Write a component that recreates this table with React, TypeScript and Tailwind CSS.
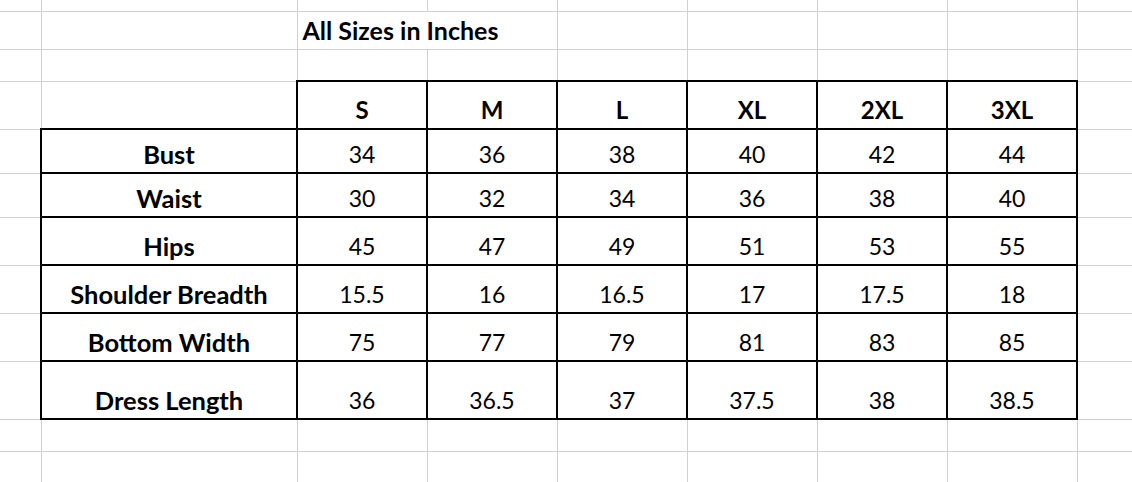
const SIZES = ['S', 'M', 'L', 'XL', '2XL', '3XL'];

const ROWS: { label: string; vals: string[]; h: string }[] = [
  { label: 'Bust', vals: ['34', '36', '38', '40', '42', '44'], h: 'h-[44px]' },
  { label: 'Waist', vals: ['30', '32', '34', '36', '38', '40'], h: 'h-[44px]' },
  { label: 'Hips', vals: ['45', '47', '49', '51', '53', '55'], h: 'h-[48px]' },
  { label: 'Shoulder Breadth', vals: ['15.5', '16', '16.5', '17', '17.5', '18'], h: 'h-[48px]' },
  { label: 'Bottom Width', vals: ['75', '77', '79', '81', '83', '85'], h: 'h-[48px]' },
  { label: 'Dress Length', vals: ['36', '36.5', '37', '37.5', '38', '38.5'], h: 'h-[58px]' },
];

// plain spreadsheet cell: thin grey gridline
const g = 'border border-[#d0d0d0] p-0';
// cell inside the size chart: heavy black border
const b = 'border-2 border-black p-0 text-center align-bottom leading-none';
const edgeL = 'border-l-0';
const edgeR = 'border-r-0';

function EmptyRow({ h, top, bottom }: { h: string; top?: boolean; bottom?: boolean }) {
  const tb = `${top ? 'border-t-0' : ''} ${bottom ? 'border-b-0' : ''}`;
  return (
    <tr className={h}>
      <td className={`${g} ${edgeL} ${tb}`} />
      <td className={`${g} ${tb}`} />
      {SIZES.map((s) => (
        <td key={s} className={`${g} ${tb}`} />
      ))}
      <td className={`${g} ${edgeR} ${tb}`} />
    </tr>
  );
}

export default function App() {
  return (
    <div className="w-[1132px] h-[482px] overflow-hidden bg-white text-black" style={{ fontFamily: 'Lato, "Open Sans", sans-serif' }}>
      <table className="border-collapse table-fixed w-[1132px]">
        <colgroup>
          <col className="w-[41px]" />
          <col className="w-[256px]" />
          {SIZES.map((s) => (
            <col key={s} className="w-[130px]" />
          ))}
          <col />
        </colgroup>
        <tbody>
          <EmptyRow h="h-[11px]" top />
          <tr className="h-[38px]">
            <td className={`${g} ${edgeL}`} />
            <td className={g} />
            <td colSpan={2} className={`${g} align-bottom pb-[6px] pl-[5px] text-[25px] font-bold leading-none whitespace-nowrap`}>
              All Sizes in Inches
            </td>
            {SIZES.slice(2).map((s) => (
              <td key={s} className={g} />
            ))}
            <td className={`${g} ${edgeR}`} />
          </tr>
          <EmptyRow h="h-[32px]" />
          <tr className="h-[48px]">
            <td className={`${g} ${edgeL}`} />
            <td className={g} />
            {SIZES.map((s) => (
              <td key={s} className={`${b} pb-[6px] text-[24px] font-bold`}>
                {s}
              </td>
            ))}
            <td className={`${g} ${edgeR}`} />
          </tr>
          {ROWS.map((r) => (
            <tr key={r.label} className={r.h}>
              <td className={`${g} ${edgeL}`} />
              <td className={`${b} pb-[5px] text-[25.5px] font-bold whitespace-nowrap`}>{r.label}</td>
              {r.vals.map((v, i) => (
                <td key={i} className={`${b} pb-[6px] text-[23px]`}>
                  {v}
                </td>
              ))}
              <td className={`${g} ${edgeR}`} />
            </tr>
          ))}
          <EmptyRow h="h-[32px]" />
          <EmptyRow h="h-[31px]" bottom />
        </tbody>
      </table>
    </div>
  );
}
